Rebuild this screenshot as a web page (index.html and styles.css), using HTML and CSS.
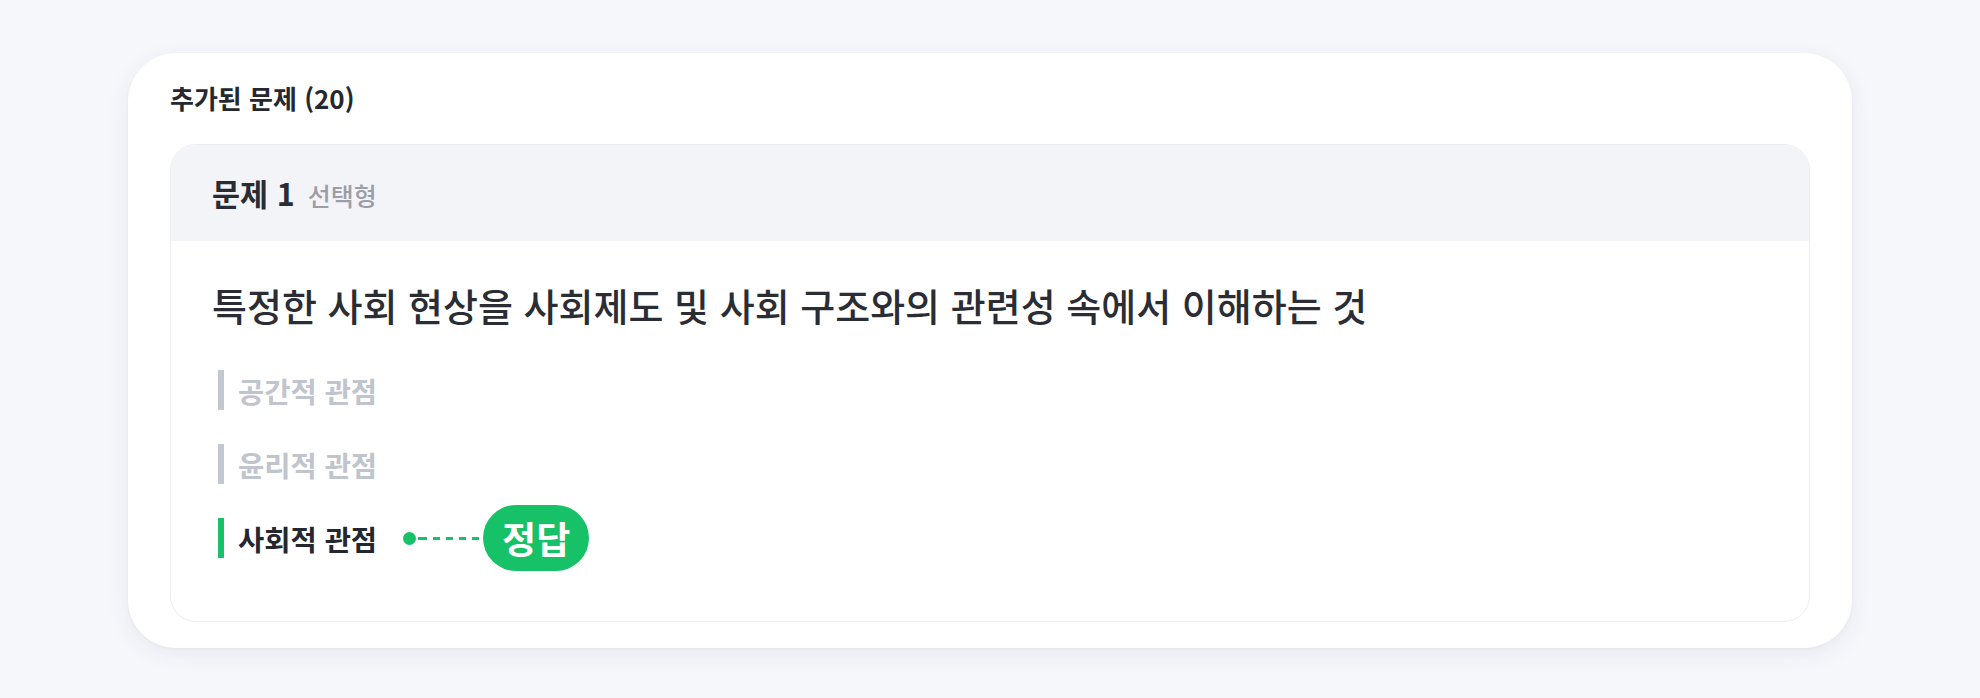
FILE: index.html
```html
<!DOCTYPE html>
<html lang="ko">
<head>
<meta charset="utf-8">
<title>추가된 문제</title>
<link rel="stylesheet" href="styles.css">
</head>
<body>
  <section class="panel">
    <h2 class="panel-title">추가된 문제 (20)</h2>
    <article class="question-card">
      <header class="question-head">
        <span class="q-number">문제 1</span>
        <span class="q-type">선택형</span>
      </header>
      <div class="question-body">
        <p class="q-text">특정한 사회 현상을 사회제도 및 사회 구조와의 관련성 속에서 이해하는 것</p>
        <ul class="options">
          <li class="option"><span class="bar"></span><span class="opt-label">공간적 관점</span></li>
          <li class="option"><span class="bar"></span><span class="opt-label">윤리적 관점</span></li>
          <li class="option correct">
            <span class="bar"></span><span class="opt-label">사회적 관점</span>
            <span class="connector"><span class="dot"></span><span class="dash"></span></span>
            <span class="badge">정답</span>
          </li>
        </ul>
      </div>
    </article>
  </section>
</body>
</html>
```
FILE: styles.css
```css
* { box-sizing: border-box; }

html, body {
  margin: 0;
  padding: 0;
}

body {
  background: #f6f7fb;
  font-family: "Noto Sans CJK KR", "Noto Sans", sans-serif;
  color: #2a2c34;
  padding: 53px 0 0 128px;
  width: 1980px;
  height: 698px;
  overflow: hidden;
}

.panel {
  width: 1724px;
  height: 595px;
  background: #ffffff;
  border-radius: 48px;
  box-shadow: 0 6px 24px rgba(40, 50, 90, 0.07), 0 1px 3px rgba(40, 50, 90, 0.04);
  padding: 28px 42px 26px 42px;
}

.panel-title {
  margin: 0;
  font-size: 26px;
  line-height: 34px;
  font-weight: 700;
  color: #26282f;
}

.question-card {
  margin-top: 29px;
  border: 1px solid #eceef2;
  border-radius: 26px;
  overflow: hidden;
  background: #ffffff;
}

.question-head {
  height: 96px;
  background: #f3f4f8;
  display: flex;
  align-items: center;
  padding: 0 41px;
  gap: 13px;
}

.q-number {
  font-size: 30.5px;
  font-weight: 700;
  color: #2a2c33;
}

.q-type {
  font-size: 25px;
  font-weight: 500;
  color: #9b9ea8;
  padding-top: 3px;
}

.question-body {
  padding: 40px 41px 63px 41px;
}

.q-text {
  margin: 0;
  font-size: 38px;
  line-height: 48px;
  font-weight: 500;
  color: #2b2d35;
}

.options {
  list-style: none;
  margin: 41px 0 0 6px;
  padding: 0;
  display: flex;
  flex-direction: column;
  gap: 34px;
}

.option {
  height: 40px;
  display: flex;
  align-items: center;
}

.bar {
  width: 6px;
  height: 40px;
  background: #c3c7d0;
  flex: none;
}

.opt-label {
  margin-left: 14px;
  font-size: 28.5px;
  font-weight: 700;
  color: #c0c4cc;
}

.correct .bar { background: #17c168; }

.correct .opt-label {
  color: #25272e;
}

.connector {
  display: flex;
  align-items: center;
  margin-left: 26px;
}

.dot {
  width: 13px;
  height: 13px;
  border-radius: 50%;
  background: #17c168;
}

.dash {
  width: 67px;
  height: 3px;
  background: repeating-linear-gradient(90deg, #17c168 0 7px, transparent 7px 13px);
  background-position: 4px 0;
}

.badge {
  height: 66px;
  margin: -13px 0;
  padding: 0 19px;
  border-radius: 33px;
  background: #17c168;
  color: #ffffff;
  font-size: 37px;
  font-weight: 700;
  display: flex;
  align-items: center;
}
```
